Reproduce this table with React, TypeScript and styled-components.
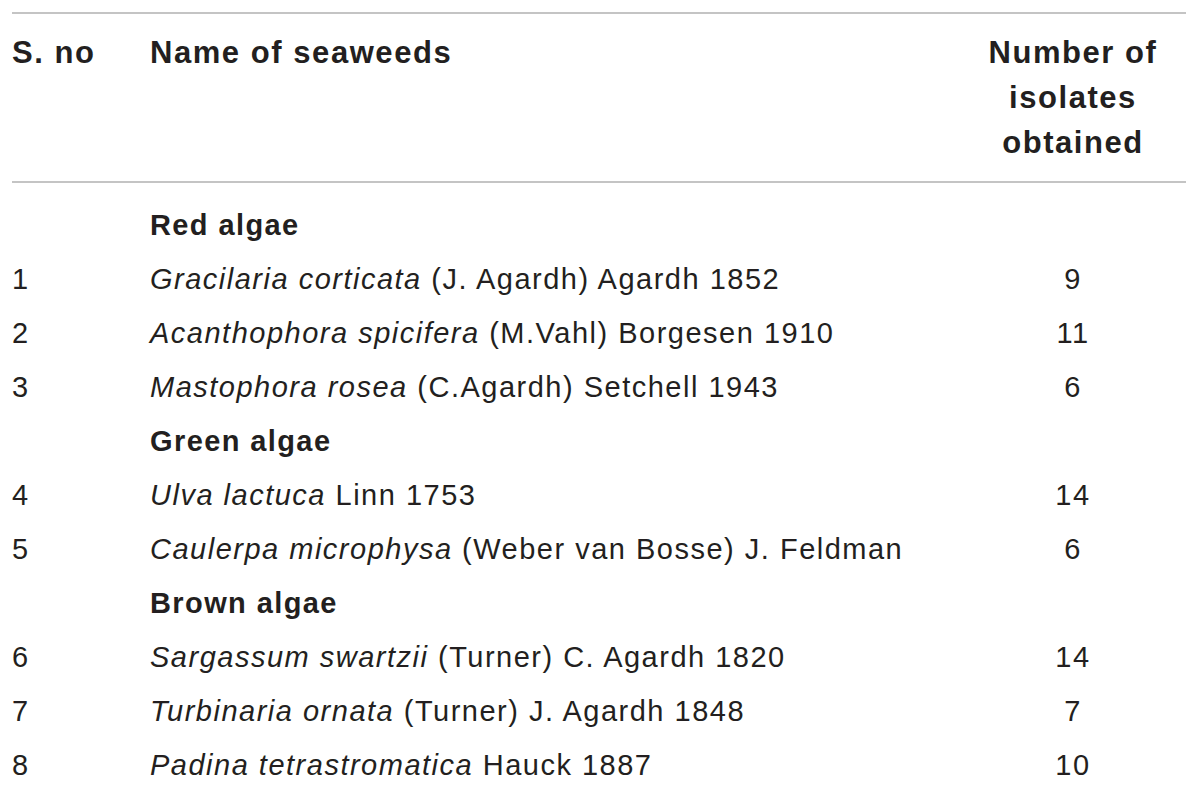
import React from "react";
import styled, { createGlobalStyle } from "styled-components";

const Global = createGlobalStyle`
  html, body { margin: 0; padding: 0; background: #ffffff; }
  body { font-family: "Liberation Sans", Arial, sans-serif; color: #231f20; }
`;

const Page = styled.div`
  padding: 12px 14px 0 12px;
`;

const Table = styled.table`
  width: 100%;
  border-collapse: collapse;
  table-layout: fixed;
`;

const HeadRow = styled.tr`
  border-top: 2px solid #c4c4c4;
  border-bottom: 2px solid #c4c4c4;
`;

const Th = styled.th<{ $align?: "left" | "center" }>`
  text-align: ${(p) => p.$align ?? "left"};
  vertical-align: top;
  font-weight: 700;
  font-size: 31px;
  letter-spacing: 1.55px;
  line-height: 45px;
  padding: 16px 0 16px 0;
`;

const Col = styled.col<{ $w: number }>`
  width: ${(p) => p.$w}px;
`;

const Td = styled.td<{ $align?: "left" | "center" }>`
  text-align: ${(p) => p.$align ?? "left"};
  font-size: 29px;
  letter-spacing: 1.5px;
  line-height: 54px;
  padding: 0;
  white-space: nowrap;
`;

const GroupCell = styled.td`
  font-weight: 700;
  font-size: 29px;
  letter-spacing: 1.4px;
  line-height: 54px;
  padding: 0;
`;

const FirstBodyRow = styled.tr`
  td { padding-top: 15px; }
`;

type Item = { n: number; genus: string; author: string; count: number };
type Group = { name: string; items: Item[] };

const groups: Group[] = [
  {
    name: "Red algae",
    items: [
      { n: 1, genus: "Gracilaria corticata", author: "(J. Agardh) Agardh 1852", count: 9 },
      { n: 2, genus: "Acanthophora spicifera", author: "(M.Vahl) Borgesen 1910", count: 11 },
      { n: 3, genus: "Mastophora rosea", author: "(C.Agardh) Setchell 1943", count: 6 },
    ],
  },
  {
    name: "Green algae",
    items: [
      { n: 4, genus: "Ulva lactuca", author: "Linn 1753", count: 14 },
      { n: 5, genus: "Caulerpa microphysa", author: "(Weber van Bosse) J. Feldman", count: 6 },
    ],
  },
  {
    name: "Brown algae",
    items: [
      { n: 6, genus: "Sargassum swartzii", author: "(Turner) C. Agardh 1820", count: 14 },
      { n: 7, genus: "Turbinaria ornata", author: "(Turner) J. Agardh 1848", count: 7 },
      { n: 8, genus: "Padina tetrastromatica", author: "Hauck 1887", count: 10 },
    ],
  },
];

export default function App() {
  return (
    <>
      <Global />
      <Page>
        <Table>
          <colgroup>
            <Col $w={138} />
            <Col $w={810} />
            <Col $w={226} />
          </colgroup>
          <thead>
            <HeadRow>
              <Th>S. no</Th>
              <Th>Name of seaweeds</Th>
              <Th $align="center">
                Number of
                <br />
                isolates
                <br />
                obtained
              </Th>
            </HeadRow>
          </thead>
          <tbody>
            {groups.map((g, gi) => {
              const Row = gi === 0 ? FirstBodyRow : "tr";
              return (
                <React.Fragment key={g.name}>
                  <Row>
                    <Td />
                    <GroupCell>{g.name}</GroupCell>
                    <Td />
                  </Row>
                  {g.items.map((it) => (
                    <tr key={it.n}>
                      <Td>{it.n}</Td>
                      <Td>
                        <i>{it.genus}</i> {it.author}
                      </Td>
                      <Td $align="center">{it.count}</Td>
                    </tr>
                  ))}
                </React.Fragment>
              );
            })}
          </tbody>
        </Table>
      </Page>
    </>
  );
}
